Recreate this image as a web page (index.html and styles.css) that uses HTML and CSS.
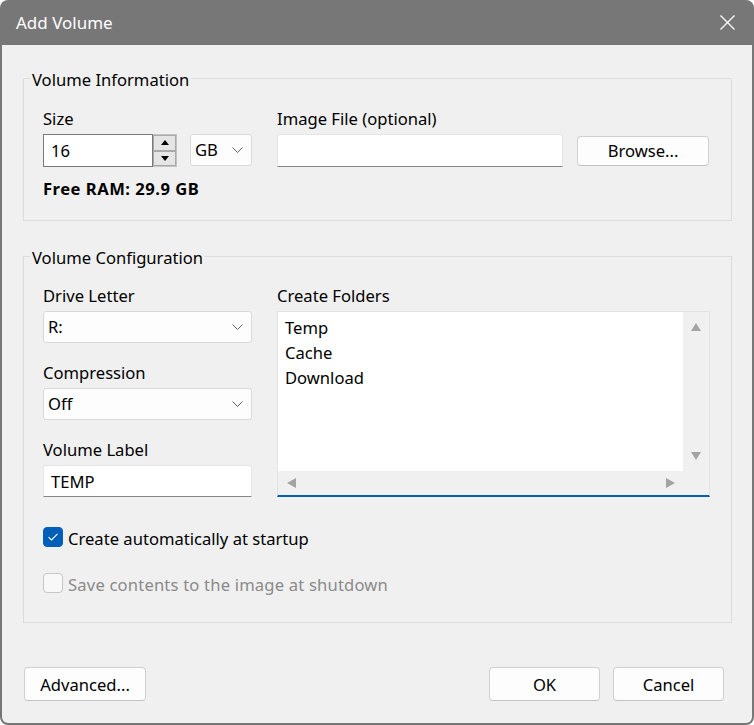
FILE: index.html
```html
<!DOCTYPE html>
<html lang="en">
<head>
    <meta charset="UTF-8">
    <title>Add Volume</title>
    <link rel="stylesheet" href="styles.css">
</head>
<body>
    <div class="window">
        <header class="titlebar">
            <span class="title">Add Volume</span>
            <svg class="close" width="15" height="15" viewBox="0 0 15 15">
                <path d="M0.5 0.5 L14.5 14.5 M14.5 0.5 L0.5 14.5" stroke="#fff" stroke-width="1.3" fill="none"/>
            </svg>
        </header>

        <div class="content">
            <!-- Volume Information -->
            <fieldset class="group group-info">
                <legend>Volume Information</legend>
                <div class="columns">
                    <div class="field">
                        <label class="caption">Size</label>
                        <div class="size-controls">
                            <div class="spin">
                                <input class="spin-edit" type="text" value="16">
                                <div class="spin-buttons">
                                    <span class="spin-btn"><span class="arrow-up"></span></span>
                                    <span class="spin-btn"><span class="arrow-down"></span></span>
                                </div>
                            </div>
                            <div class="combo combo-unit">
                                <span>GB</span>
                                <svg class="chevron" width="11" height="6" viewBox="0 0 11 6"><path d="M0.5 0.5 L5.5 5.5 L10.5 0.5" stroke="#606060" fill="none"/></svg>
                            </div>
                        </div>
                        <div class="free-ram">Free RAM: 29.9 GB</div>
                    </div>
                    <div class="field">
                        <label class="caption">Image File (optional)</label>
                        <div class="image-controls">
                            <input class="edit image-edit" type="text" value="">
                            <button class="btn btn-browse">Browse...</button>
                        </div>
                    </div>
                </div>
            </fieldset>

            <!-- Volume Configuration -->
            <fieldset class="group group-config">
                <legend>Volume Configuration</legend>
                <div class="columns">
                    <div class="field">
                        <label class="caption">Drive Letter</label>
                        <div class="combo">
                            <span>R:</span>
                            <svg class="chevron" width="11" height="6" viewBox="0 0 11 6"><path d="M0.5 0.5 L5.5 5.5 L10.5 0.5" stroke="#606060" fill="none"/></svg>
                        </div>
                        <label class="caption next">Compression</label>
                        <div class="combo">
                            <span>Off</span>
                            <svg class="chevron" width="11" height="6" viewBox="0 0 11 6"><path d="M0.5 0.5 L5.5 5.5 L10.5 0.5" stroke="#606060" fill="none"/></svg>
                        </div>
                        <label class="caption next">Volume Label</label>
                        <input class="edit label-edit" type="text" value="TEMP">
                    </div>
                    <div class="field">
                        <label class="caption">Create Folders</label>
                        <div class="listbox">
                            <div class="list-items">
                                <div>Temp</div>
                                <div>Cache</div>
                                <div>Download</div>
                            </div>
                            <div class="vscroll">
                                <span class="tri tri-up"></span>
                                <span class="tri tri-down"></span>
                            </div>
                            <div class="hscroll">
                                <span class="tri tri-left"></span>
                                <span class="tri tri-right"></span>
                            </div>
                        </div>
                    </div>
                </div>

                <div class="checks">
                    <div class="check-row">
                        <span class="checkbox checked">
                            <svg width="12" height="10" viewBox="0 0 12 10"><path d="M1.5 5.2 L4.5 8 L10.5 1.8" stroke="#fff" stroke-width="1.1" fill="none"/></svg>
                        </span>
                        <span>Create automatically at startup</span>
                    </div>
                    <div class="check-row disabled">
                        <span class="checkbox"></span>
                        <span>Save contents to the image at shutdown</span>
                    </div>
                </div>
            </fieldset>

            <div class="footer">
                <button class="btn btn-advanced">Advanced...</button>
                <div class="footer-right">
                    <button class="btn btn-dialog">OK</button>
                    <button class="btn btn-dialog">Cancel</button>
                </div>
            </div>
        </div>
    </div>
</body>
</html>
```

FILE: styles.css
```css
/* Reset */
* {
    margin: 0;
    padding: 0;
    box-sizing: border-box;
}
body {
    background-color: #fff;
    font-family: 'Noto Sans', sans-serif;
    font-size: 16.6px;
    line-height: 24px;
    color: #000;
}
input, button {
    font-family: inherit;
    font-size: inherit;
    color: inherit;
}

/* Window frame */
.window {
    width: 754px;
    height: 725px;
    background-color: #777;
    border-radius: 8px;
    padding: 0 2px 2px;
    display: flex;
    flex-direction: column;
}
.titlebar {
    height: 45px;
    flex-shrink: 0;
    display: flex;
    align-items: center;
    justify-content: space-between;
    padding: 0 17px 0 14px;
    color: #fff;
}
.title {
    font-size: 17px;
}

.content {
    flex: 1;
    background-color: #f0f0f0;
    border-radius: 0 0 6px 6px;
    padding: 19px 20px 0 21px;
    display: flex;
    flex-direction: column;
}

/* Group boxes */
.group {
    border: 1px solid #dcdcdc;
    padding: 15px 21px 19px 19px;
}
.group legend {
    margin-left: -13px;
    padding: 4px 2px 0;
    line-height: 24px;
}
.group-config {
    margin-top: 21px;
    padding-top: 14px;
    padding-bottom: 25px;
}

.columns {
    display: grid;
    grid-template-columns: 209px 1fr;
    column-gap: 25px;
}
.field {
    display: flex;
    flex-direction: column;
}
.caption {
    display: block;
    margin-bottom: 3px;
}
.caption.next {
    margin-top: 18px;
}

/* Size spinner */
.size-controls {
    display: flex;
    gap: 13px;
}
.spin {
    display: flex;
    height: 33px;
}
.spin-edit {
    width: 110px;
    height: 33px;
    border: 1px solid #7a7a7a;
    background-color: #fff;
    padding: 0 7px;
    outline: none;
}
.spin-buttons {
    width: 24px;
    display: flex;
    flex-direction: column;
    border: 1px solid #c4c4c4;
    border-left: none;
}
.spin-btn {
    flex: 1;
    display: flex;
    align-items: center;
    justify-content: center;
    background-color: #e5e5e5;
    border: 1px solid #a9a9a9;
}
.arrow-up, .arrow-down {
    width: 0;
    height: 0;
    border-left: 4.5px solid transparent;
    border-right: 4.5px solid transparent;
}
.arrow-up {
    border-bottom: 5px solid #000;
}
.arrow-down {
    border-top: 5px solid #000;
}

/* Combo boxes */
.combo {
    height: 32px;
    display: flex;
    align-items: center;
    justify-content: space-between;
    padding: 0 8px 0 4px;
    background-color: #fdfdfd;
    border: 1px solid #d9d9d9;
    border-radius: 3px;
}
.combo-unit {
    width: 62px;
}
.chevron {
    display: block;
}

.free-ram {
    font-weight: 700;
    letter-spacing: 0.5px;
    margin-top: 10px;
}

/* Edits */
.edit {
    height: 32px;
    background-color: #fff;
    border: 1px solid #e5e5e5;
    border-bottom-color: #868686;
    border-radius: 3px 3px 0 0;
    padding: 0 7px;
    outline: none;
}
.image-controls {
    display: flex;
    align-items: center;
    gap: 14px;
}
.image-edit {
    width: 286px;
    height: 33px;
}

/* Buttons */
.btn {
    background-color: #fdfdfd;
    border: 1px solid #d0d0d0;
    border-bottom-color: #c2c2c2;
    border-radius: 4px;
    height: 30px;
    cursor: pointer;
}
.btn-browse {
    width: 132px;
}

/* List box */
.listbox {
    height: 186px;
    display: grid;
    grid-template-columns: 1fr 26px;
    grid-template-rows: 1fr 24px;
    border: 1px solid #e3e3e3;
    border-bottom: 2px solid #005fb8;
    background-color: #f0f0f0;
}
.list-items {
    background-color: #fff;
    padding: 3px 7px;
    line-height: 25px;
}
.vscroll {
    grid-row: 1 / 3;
    grid-column: 2;
    display: flex;
    flex-direction: column;
    justify-content: space-between;
    align-items: center;
    padding: 11px 0 35px;
}
.hscroll {
    grid-row: 2;
    grid-column: 1;
    display: flex;
    justify-content: space-between;
    align-items: center;
    padding: 0 8px 0 9px;
}
.tri {
    width: 0;
    height: 0;
}
.tri-up {
    border-left: 5.5px solid transparent;
    border-right: 5.5px solid transparent;
    border-bottom: 8px solid #a3a3a3;
}
.tri-down {
    border-left: 5.5px solid transparent;
    border-right: 5.5px solid transparent;
    border-top: 8px solid #a3a3a3;
}
.tri-left {
    border-top: 5px solid transparent;
    border-bottom: 5px solid transparent;
    border-right: 9px solid #a3a3a3;
}
.tri-right {
    border-top: 5px solid transparent;
    border-bottom: 5px solid transparent;
    border-left: 9px solid #a3a3a3;
}

/* Check boxes */
.checks {
    margin-top: 30px;
    display: flex;
    flex-direction: column;
    gap: 22px;
}
.check-row {
    display: flex;
    align-items: flex-start;
    gap: 5px;
}
.checkbox {
    width: 20px;
    height: 20px;
    border: 1px solid #c6c6c6;
    border-radius: 4px;
    background-color: #f8f8f8;
    display: flex;
    align-items: center;
    justify-content: center;
}
.checkbox.checked {
    background-color: #005fb8;
    border-color: #005fb8;
}
.check-row.disabled {
    color: #8a8a8a;
    letter-spacing: 0.18px;
}

/* Footer */
.footer {
    margin: 44px 8px 0 1px;
    display: flex;
    justify-content: space-between;
}
.footer-right {
    display: flex;
    gap: 13px;
}
.footer .btn {
    height: 34px;
}
.btn-advanced {
    width: 122px;
}
.btn-dialog {
    width: 111px;
}
```
